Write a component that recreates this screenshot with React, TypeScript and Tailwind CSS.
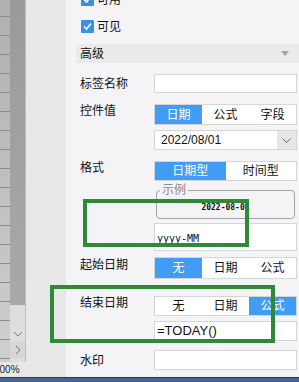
import React from 'react';

const cjk = "font-['Liberation_Sans','Noto_Sans_CJK_SC',sans-serif]";

function Check({ label, className }: { label: string; className?: string }) {
  return (
    <div className={`flex items-center h-[13px] ${className ?? ''}`}>
      <div className="w-[13px] h-[13px] bg-[#3a8ee6] rounded-[1px] flex items-center justify-center">
        <svg width="11" height="11" viewBox="0 0 11 11">
          <polyline points="2,5.5 4.5,8 9,2.5" fill="none" stroke="#fff" strokeWidth="1.6" />
        </svg>
      </div>
      <span className="ml-[3px] text-[12px] leading-[12px] text-[#111]">{label}</span>
    </div>
  );
}

function Segment({ options, active, h }: { options: string[]; active: number; h: string }) {
  return (
    <div className={`flex w-[143px] border border-[#d6d6d6] bg-white ${h}`}>
      {options.map((o, i) => (
        <div
          key={o}
          className={`flex-1 flex items-center justify-center text-[12px] ${
            i === active ? 'bg-[#409cf5] text-white' : 'text-[#111]'
          }`}
        >
          {o}
        </div>
      ))}
    </div>
  );
}

function Row({ label, pt, children, className }: { label: string; pt: string; children: React.ReactNode; className?: string }) {
  return (
    <div className={`flex ${className ?? ''}`}>
      <div className={`w-[74px] text-[12px] leading-[12px] text-[#111] ${pt}`}>{label}</div>
      <div className="flex flex-col w-[143px]">{children}</div>
    </div>
  );
}

export default function App() {
  return (
    <div className={`relative w-[299px] h-[382px] overflow-hidden flex flex-col bg-[#f4f4f6] ${cjk}`}>
      <div className="flex h-[377px]">
        {/* spreadsheet edge */}
        <div className="flex flex-col w-[66px]">
          <div className="flex flex-1">
            <div className="w-[10px] flex flex-col bg-linear-to-b from-[#b0b0b0] to-[#cfcfcf] overflow-hidden">
              <div className="h-[17px] shrink-0 border-b border-[#8c8c8c]" />
              {Array.from({ length: 18 }).map((_, i) => (
                <div key={i} className="h-[19px] shrink-0 border-b border-[#8c8c8c]" />
              ))}
            </div>
            <div className="w-[15px] flex flex-col bg-[#dedede]">
              <div className="h-[305px] bg-linear-to-b from-[#9a9a9a] to-[#a9a9a9]" />
              <div className="h-[20px]" />
              <div className="h-[17px] flex items-center justify-center">
                <svg width="10" height="6" viewBox="0 0 10 6">
                  <polyline points="1,1 5,5 9,1" fill="none" stroke="#7a7a7a" strokeWidth="1" />
                </svg>
              </div>
              <div className="h-[16px] bg-[#d6d6d6] flex items-center justify-center">
                <svg width="6" height="10" viewBox="0 0 6 10">
                  <polyline points="1,1 5,5 1,9" fill="none" stroke="#7a7a7a" strokeWidth="1" />
                </svg>
              </div>
            </div>
            <div className="w-px bg-[#bdbdbd]" />
            <div className="w-[40px] bg-[#e8e8e8]" />
          </div>
          <div className="h-[15px] flex bg-[#e8e8e8] overflow-hidden">
            <span className="-ml-[6px] text-[10px] leading-[15px] text-[#222] font-['Liberation_Sans',sans-serif]">100%</span>
          </div>
        </div>

        {/* property panel */}
        <div className="flex-1 flex flex-col pl-[14px]">
          <Check label="可用" className="-mt-[7px] ml-px" />
          <Check label="可见" className="mt-[14px] ml-px" />

          <div className="mt-[11px] -ml-[4px] h-[19px] bg-[#ebebeb] flex items-center justify-between pl-[4px] pr-[10px]">
            <span className="text-[12px] leading-[12px] text-[#111]">高级</span>
            <svg width="8" height="5" viewBox="0 0 8 5">
              <polygon points="0,0 8,0 4,5" fill="#a3a3a3" />
            </svg>
          </div>

          <Row label="标签名称" pt="pt-[4px]" className="mt-[11px]">
            <div className="h-[19px] border border-[#d6d6d6] bg-white" />
          </Row>

          <Row label="控件值" pt="pt-[1px]" className="mt-[11px]">
            <Segment options={['日期', '公式', '字段']} active={0} h="h-[21px]" />
            <div className="mt-[5px] h-[20px] flex border border-[#d6d6d6] bg-white">
              <span className="flex-1 pl-[6px] text-[12px] leading-[18px] text-[#111]">2022/08/01</span>
              <div className="w-[19px] bg-[#e6e6e6] flex items-center justify-center">
                <svg width="9" height="5" viewBox="0 0 9 5">
                  <polyline points="0.5,0.5 4.5,4.5 8.5,0.5" fill="none" stroke="#666" strokeWidth="1" />
                </svg>
              </div>
            </div>
          </Row>

          <Row label="格式" pt="pt-[1px]" className="mt-[11px]">
            <Segment options={['日期型', '时间型']} active={0} h="h-[20px]" />
            <div className="relative mt-[3px] mx-[2px] h-[35px] pt-[6px]">
              <div className="h-[29px] border border-[#a3a3a3] rounded-[4px] flex items-center justify-center pt-[7px]">
                <span className="text-[8px] leading-[8px] font-bold text-[#111] font-['DejaVu_Sans_Mono',monospace]">2022-08-01</span>
              </div>
              <span className="absolute top-0 left-[4px] px-[2px] bg-[#f4f4f6] text-[12px] leading-[12px] text-[#8a8a8a]">示例</span>
            </div>
            <div className="mt-[4px] h-[28px] border border-[#d6d6d6] bg-white flex items-center pl-[2px] pt-[2px]">
              <span className="text-[10px] text-[#111] font-['DejaVu_Sans_Mono',monospace]">yyyy-MM</span>
            </div>
          </Row>

          <Row label="起始日期" pt="pt-[2px]" className="mt-[6px]">
            <Segment options={['无', '日期', '公式']} active={0} h="h-[22px]" />
          </Row>

          <Row label="结束日期" pt="pt-[1px]" className="mt-[17px]">
            <Segment options={['无', '日期', '公式']} active={2} h="h-[20px]" />
            <div className="mt-[5px] h-[20px] border border-[#d6d6d6] bg-white flex items-center pl-[2px]">
              <span className="text-[13px] text-[#111] font-['Liberation_Sans',sans-serif]">=TODAY()</span>
            </div>
          </Row>

          <Row label="水印" pt="pt-[5px]" className="mt-[9px]">
            <div className="h-[20px] border border-[#d6d6d6] bg-white" />
          </Row>
        </div>
      </div>

      <div className="h-[5px] border-t border-[#2c3849] bg-[#46658f]" />

      {/* annotation boxes */}
      <div className="absolute left-[83px] top-[199px] w-[166px] h-[48px] border-4 border-[#2f8a38]" />
      <div className="absolute left-[50px] top-[285px] w-[225px] h-[58px] border-4 border-[#2f8a38]" />
    </div>
  );
}
